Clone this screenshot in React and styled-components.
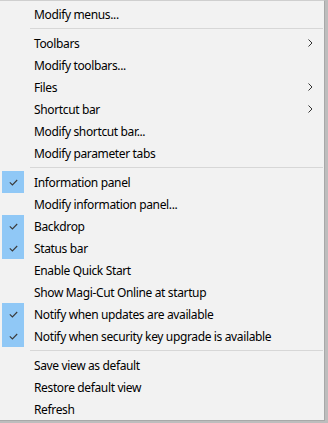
import React from "react"
import styled, { createGlobalStyle } from "styled-components"

const groups = [
  [{ label: "Modify menus..." }],
  [
    { label: "Toolbars", sub: true },
    { label: "Modify toolbars..." },
    { label: "Files", sub: true },
    { label: "Shortcut bar", sub: true },
    { label: "Modify shortcut bar..." },
    { label: "Modify parameter tabs" },
  ],
  [
    { label: "Information panel", checked: true },
    { label: "Modify information panel..." },
    { label: "Backdrop", checked: true },
    { label: "Status bar", checked: true },
    { label: "Enable Quick Start" },
    { label: "Show Magi-Cut Online at startup" },
    { label: "Notify when updates are available", checked: true },
    { label: "Notify when security key upgrade is available", checked: true },
  ],
  [
    { label: "Save view as default" },
    { label: "Restore default view" },
    { label: "Refresh" },
  ],
]

const App = () => {
  return (
    <>
      <GlobalStyle />
      <Menu>
        {groups.map((group, gi) => (
          <React.Fragment key={gi}>
            {gi > 0 && <Separator />}
            {group.map((item) => (
              <Item key={item.label}>
                <CheckCell $checked={item.checked}>
                  {item.checked && (
                    <svg width="9" height="7" viewBox="0 0 9 7">
                      <path
                        d="M0.8 3.4 L3.4 6 L8.2 1"
                        fill="none"
                        stroke="#3a3a3a"
                        strokeWidth="1.1"
                      />
                    </svg>
                  )}
                </CheckCell>
                <Label>{item.label}</Label>
                {item.sub && (
                  <Arrow>
                    <svg width="5" height="8" viewBox="0 0 5 8">
                      <path
                        d="M0.5 0.5 L4 4 L0.5 7.5"
                        fill="none"
                        stroke="#333"
                        strokeWidth="1"
                      />
                    </svg>
                  </Arrow>
                )}
              </Item>
            ))}
          </React.Fragment>
        ))}
      </Menu>
    </>
  )
}

export default App

const GlobalStyle = createGlobalStyle`
  body {
    margin: 0;
    background: #bdbdbd;
    font-family: "Noto Sans", "Open Sans", sans-serif;
  }
`

const Menu = styled.div`
  width: 325px;
  height: 421px;
  box-sizing: border-box;
  background: #f2f2f2;
  border-top: 1px solid #cfcfcf;
  border-right: 1px solid #a8a8a8;
  border-bottom: 1px solid #a8a8a8;
  padding: 2px 0 0 2px;
`

const Item = styled.div`
  display: flex;
  align-items: center;
  height: 22px;
`

const CheckCell = styled.div`
  width: 22px;
  height: 22px;
  display: flex;
  align-items: center;
  justify-content: center;
  background: ${(p) => (p.$checked ? "#90c8f6" : "transparent")};
`

const Label = styled.span`
  flex: 1;
  margin-left: 10px;
  font-size: 12px;
  letter-spacing: -0.36px;
  color: #000;
  white-space: nowrap;
`

const Arrow = styled.span`
  display: flex;
  width: 5px;
  margin-right: 11px;
`

const Separator = styled.div`
  height: 1px;
  background: #d7d7d7;
  margin: 3px 1px 3px 28px;
`
